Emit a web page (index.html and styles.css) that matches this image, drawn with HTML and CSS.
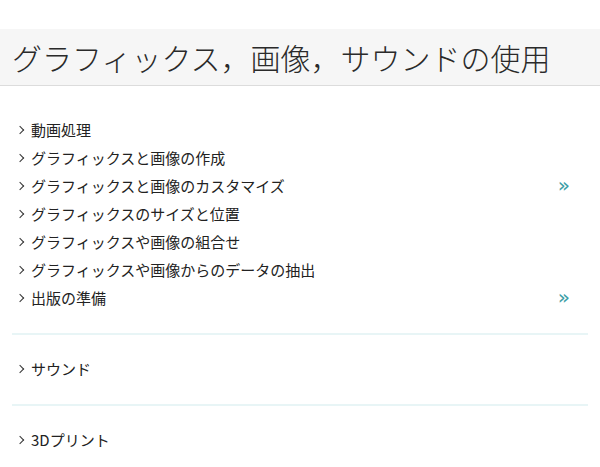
FILE: index.html
```html
<!DOCTYPE html>
<html lang="ja">
<head>
  <meta charset="UTF-8">
  <title>グラフィックス，画像，サウンドの使用</title>
  <link rel="stylesheet" href="styles.css">
</head>
<body>
  <header class="page-header">
    <h1 class="title">グラフィックス，画像，サウンドの使用</h1>
  </header>

  <section class="group group-first">
    <ul class="links">
      <li><span class="chev"></span>動画処理</li>
      <li><span class="chev"></span>グラフィックスと画像の作成</li>
      <li><span class="chev"></span>グラフィックスと画像のカスタマイズ<span class="more">»</span></li>
      <li><span class="chev"></span>グラフィックスのサイズと位置</li>
      <li><span class="chev"></span>グラフィックスや画像の組合せ</li>
      <li><span class="chev"></span>グラフィックスや画像からのデータの抽出</li>
      <li><span class="chev"></span>出版の準備<span class="more">»</span></li>
    </ul>
  </section>

  <section class="group">
    <ul class="links">
      <li><span class="chev"></span>サウンド</li>
    </ul>
  </section>

  <section class="group">
    <ul class="links">
      <li><span class="chev"></span>3Dプリント</li>
    </ul>
  </section>
</body>
</html>
```

FILE: styles.css
```css
body {
  margin: 0;
  font-family: "Noto Sans CJK JP", "Noto Sans", sans-serif;
  color: #222;
  background: #fff;
}

.page-header {
  margin-top: 29px;
  height: 56px;
  background-color: #f6f6f6;
  border-bottom: 1px solid #dcdcdc;
}

.title {
  margin: 0;
  padding-left: 12px;
  font-size: 30px;
  font-weight: 300;
  line-height: 56px;
  color: #2a2a2a;
  white-space: nowrap;
}

.group {
  margin: 0 12px;
  padding: 19px 0 22px;
  border-top: 2px solid #e8f5f6;
}

.group-first {
  border-top: none;
  padding-top: 29px;
}

.links {
  list-style: none;
  margin: 0;
  padding: 0;
}

.links li {
  display: flex;
  align-items: center;
  height: 28px;
  font-size: 15px;
}

.chev {
  width: 5px;
  height: 5px;
  margin: 1px 8px 0 5px;
  border-right: 1px solid #333;
  border-top: 1px solid #333;
  transform: rotate(45deg);
}

.more {
  margin-left: auto;
  margin-right: 18px;
  font-family: "DejaVu Sans", sans-serif;
  font-size: 20px;
  color: #3d9ea6;
}
```
